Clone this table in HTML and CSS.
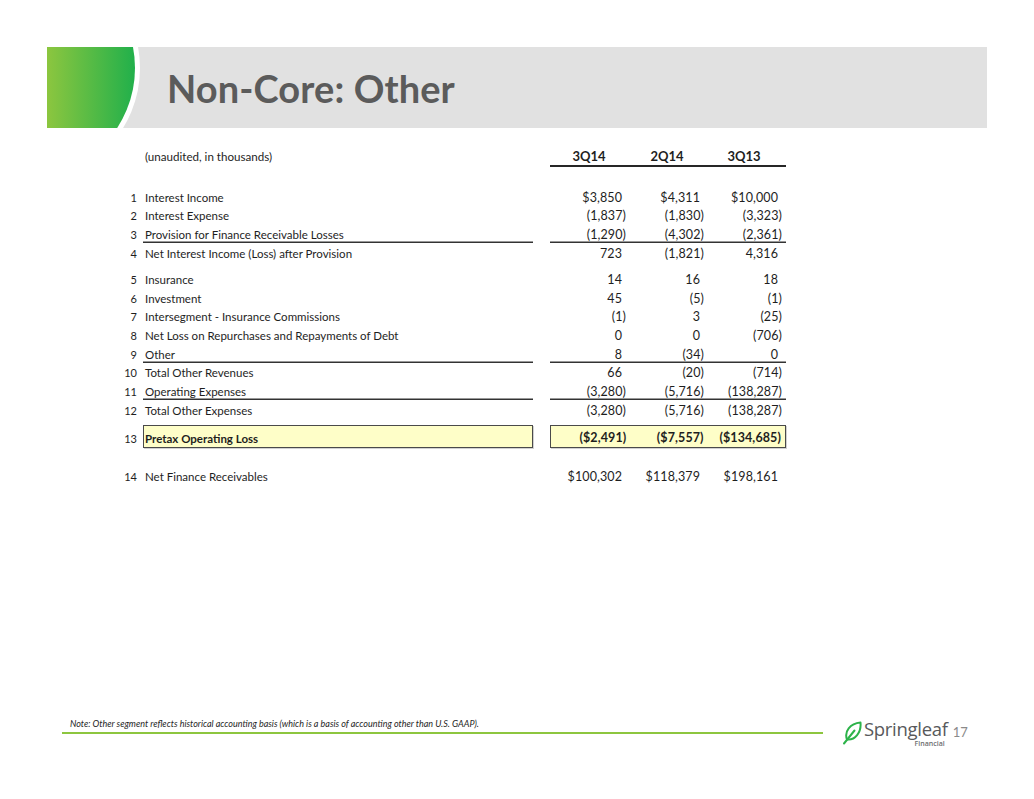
FILE: index.html
```html
<!DOCTYPE html>
<html lang="en">
<head>
<meta charset="utf-8">
<title>Non-Core: Other</title>
<link rel="stylesheet" href="styles.css">
</head>
<body>
<div class="page">
  <header class="band">
    <svg class="swoosh" width="95" height="81" viewBox="0 0 95 81" aria-hidden="true">
      <defs>
        <linearGradient id="g" gradientUnits="userSpaceOnUse" x1="0" y1="0" x2="88" y2="0">
          <stop offset="0" stop-color="#8cc63f"/>
          <stop offset="1" stop-color="#21b04b"/>
        </linearGradient>
      </defs>
      <circle cx="-22" cy="21" r="115" fill="#ffffff"/>
      <circle cx="-22" cy="21" r="110" fill="url(#g)"/>
    </svg>
    <h1 class="title">Non-Core: Other</h1>
  </header>

  <section class="table">
    <div class="row head">
      <span class="idx"></span>
      <span class="lbl">(unaudited, in thousands)</span>
      <span class="vals">
        <span class="h">3Q14</span><span class="h">2Q14</span><span class="h">3Q13</span>
      </span>
    </div>

    <div class="group g1">
      <div class="row"><span class="idx">1</span><span class="lbl">Interest Income</span><span class="vals"><span class="v pos">$3,850</span><span class="v pos">$4,311</span><span class="v pos">$10,000</span></span></div>
      <div class="row"><span class="idx">2</span><span class="lbl">Interest Expense</span><span class="vals"><span class="v">(1,837)</span><span class="v">(1,830)</span><span class="v">(3,323)</span></span></div>
      <div class="row ul"><span class="idx">3</span><span class="lbl">Provision for Finance Receivable Losses</span><span class="vals"><span class="v">(1,290)</span><span class="v">(4,302)</span><span class="v">(2,361)</span></span></div>
      <div class="row"><span class="idx">4</span><span class="lbl">Net Interest Income (Loss) after Provision</span><span class="vals"><span class="v pos">723</span><span class="v">(1,821)</span><span class="v pos">4,316</span></span></div>
    </div>

    <div class="group g2">
      <div class="row"><span class="idx">5</span><span class="lbl">Insurance</span><span class="vals"><span class="v pos">14</span><span class="v pos">16</span><span class="v pos">18</span></span></div>
      <div class="row"><span class="idx">6</span><span class="lbl">Investment</span><span class="vals"><span class="v pos">45</span><span class="v">(5)</span><span class="v">(1)</span></span></div>
      <div class="row"><span class="idx">7</span><span class="lbl">Intersegment - Insurance Commissions</span><span class="vals"><span class="v">(1)</span><span class="v pos">3</span><span class="v">(25)</span></span></div>
      <div class="row"><span class="idx">8</span><span class="lbl">Net Loss on Repurchases and Repayments of Debt</span><span class="vals"><span class="v pos">0</span><span class="v pos">0</span><span class="v">(706)</span></span></div>
      <div class="row ul"><span class="idx">9</span><span class="lbl">Other</span><span class="vals"><span class="v pos">8</span><span class="v">(34)</span><span class="v pos">0</span></span></div>
      <div class="row"><span class="idx">10</span><span class="lbl">Total Other Revenues</span><span class="vals"><span class="v pos">66</span><span class="v">(20)</span><span class="v">(714)</span></span></div>
      <div class="row ul"><span class="idx">11</span><span class="lbl">Operating Expenses</span><span class="vals"><span class="v">(3,280)</span><span class="v">(5,716)</span><span class="v">(138,287)</span></span></div>
      <div class="row"><span class="idx">12</span><span class="lbl">Total Other Expenses</span><span class="vals"><span class="v">(3,280)</span><span class="v">(5,716)</span><span class="v">(138,287)</span></span></div>
    </div>

    <div class="row total"><span class="idx">13</span><span class="lbl">Pretax Operating Loss</span><span class="vals"><span class="v">($2,491)</span><span class="v">($7,557)</span><span class="v">($134,685)</span></span></div>

    <div class="row last"><span class="idx">14</span><span class="lbl">Net Finance Receivables</span><span class="vals"><span class="v pos">$100,302</span><span class="v pos">$118,379</span><span class="v pos">$198,161</span></span></div>
  </section>

  <footer class="foot">
    <div class="foot-left">
      <p class="note">Note: Other segment reflects historical accounting basis (which is a basis of accounting other than U.S. GAAP).</p>
      <div class="rule"></div>
    </div>
    <div class="brand">
      <svg class="leaf" width="20" height="24" viewBox="0 0 20 24" aria-hidden="true">
        <path d="M5 18.5 C2 10.5 8 2.5 18.5 1.5 C19.5 11.5 13 19.5 5 18.5 Z" fill="none" stroke="#2db34a" stroke-width="2" stroke-linejoin="round"/>
        <path d="M2 22.5 L12.5 9.5" fill="none" stroke="#2db34a" stroke-width="2" stroke-linecap="round"/>
      </svg>
      <div class="wordmark">
        <span class="spring">Springleaf</span>
        <span class="fin">Financial</span>
      </div>
      <span class="pageno">17</span>
    </div>
  </footer>
</div>
</body>
</html>
```

FILE: styles.css
```css
* { box-sizing: border-box; }

html, body {
  margin: 0;
  padding: 0;
  background: #ffffff;
}

body {
  font-family: "Lato", "Open Sans", sans-serif;
  color: #1e1e1e;
}

.page {
  width: 1034px;
  height: 799px;
  display: flex;
  flex-direction: column;
  overflow: hidden;
}

/* ---------- header band ---------- */
.band {
  margin: 47px 0 0 47px;
  width: 940px;
  height: 81px;
  background: #e1e1e1;
  display: flex;
  align-items: center;
}

.swoosh {
  display: block;
  flex: none;
  align-self: flex-start;
}

.title {
  margin: 0 0 0 25px;
  font-family: "Lato", sans-serif;
  font-weight: 700;
  font-size: 38px;
  color: #5b5b5b;
  letter-spacing: 0.1px;
}

/* ---------- table ---------- */
.table {
  margin: 20px 0 0 110px;
  font-size: 11.5px;
}

.row {
  display: flex;
  height: 18.7px;
}

.idx,
.lbl,
.v,
.h {
  display: flex;
  align-items: flex-end;
  line-height: 14px;
  padding-bottom: 1px;
  white-space: nowrap;
}

.idx {
  width: 27px;
  margin-right: 6px;
  justify-content: flex-end;
  font-size: 11px;
}

.lbl {
  width: 390px;
  padding-left: 2px;
}

.vals {
  margin-left: 17px;
  width: 236px;
  display: flex;
}

.v {
  width: 78px;
  justify-content: flex-end;
  padding-right: 2px;
  font-size: 12.5px;
  letter-spacing: 0.1px;
}

.v:last-child {
  width: 80px;
  padding-right: 4px;
}

.v.pos { padding-right: 6px; }
.v.pos:last-child { padding-right: 8px; }

.ul .lbl,
.ul .vals {
  box-shadow: inset 0 -1.5px 0 #333333;
}

/* heading row */
.head {
  height: 19px;
}

.head .lbl {
  font-size: 11.6px;
  padding-bottom: 3px;
}

.head .vals {
  border-bottom: 2px solid #262626;
}

.h {
  width: 78px;
  justify-content: center;
  font-weight: 700;
  font-size: 13px;
  padding-bottom: 2px;
}

.h:last-child {
  width: 80px;
  padding-right: 4px;
}

.g1 {
  margin-top: 20px;
}

.g2 {
  margin-top: 7.5px;
}

/* total row */
.total {
  margin-top: 6.4px;
  height: 22.7px;
}

.total .lbl,
.total .vals {
  background: #fefec8;
  border: 1px solid #4a4a4a;
  box-shadow: 1px 1px 0 rgba(0, 0, 0, 0.18);
  font-weight: 700;
  padding-bottom: 1px;
}

.total .vals .v {
  padding-bottom: 1px;
}

.total .idx {
  padding-bottom: 2px;
}

.total .lbl {
  padding-left: 1px;
}

.last {
  margin-top: 18.5px;
}

/* ---------- footer ---------- */
.foot {
  margin-top: auto;
  margin-bottom: 51px;
  display: flex;
  align-items: flex-start;
}

.foot-left {
  margin-left: 62px;
  width: 761px;
  padding-top: 2px;
}

.note {
  margin: 0 0 2px 0;
  padding-left: 8px;
  font-style: italic;
  font-size: 9px;
  line-height: 12px;
  color: #1e1e1e;
}

.rule {
  height: 1.5px;
  background: #8dc63f;
}

.brand {
  margin-left: 19px;
  display: flex;
  align-items: flex-start;
}

.leaf {
  display: block;
  margin-top: 5px;
}

.wordmark {
  display: flex;
  flex-direction: column;
  align-items: flex-end;
  margin-left: 2px;
  margin-top: 3px;
}

.spring {
  font-family: "Open Sans", sans-serif;
  font-size: 18.5px;
  line-height: 19px;
  color: #58595b;
  letter-spacing: -0.3px;
}

.fin {
  font-family: "Open Sans", sans-serif;
  font-weight: 600;
  font-size: 7px;
  line-height: 8px;
  color: #6d6e70;
  margin-top: 2px;
  margin-right: 3px;
}

.pageno {
  margin-left: 5px;
  margin-top: 9px;
  font-size: 13px;
  line-height: 14px;
  color: #8a8a8a;
}
```
